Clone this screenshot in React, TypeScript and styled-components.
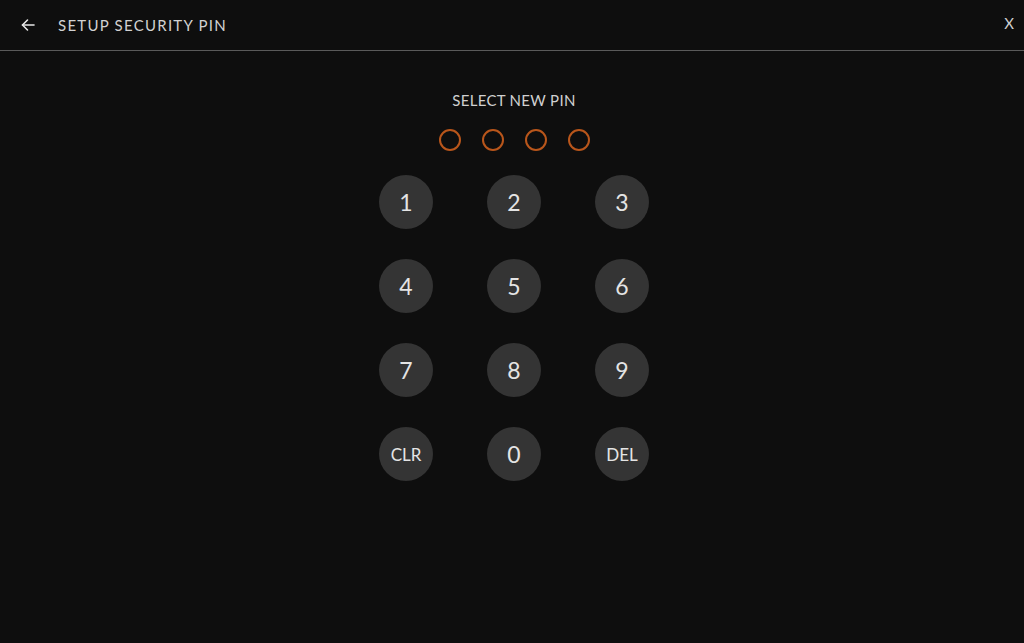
import React from 'react';
import styled, { createGlobalStyle } from 'styled-components';

const GlobalStyle = createGlobalStyle`
  html, body {
    margin: 0;
    padding: 0;
    height: 100%;
    background: #0e0e0e;
  }
  #root {
    height: 100%;
  }
`;

interface KeyProps {
  small?: boolean;
}

const Screen = styled.div`
  height: 100%;
  display: flex;
  flex-direction: column;
  background: #0e0e0e;
  font-family: Lato, "Open Sans", sans-serif;
  color: #e2e2e2;
`;

const Header = styled.header`
  height: 50px;
  display: flex;
  align-items: center;
  padding: 0 10px 0 19px;
  border-bottom: 1px solid #5a5a5a;
`;

const BackButton = styled.button`
  width: 18px;
  height: 18px;
  padding: 0;
  border: 0;
  background: none;
  color: #e6e6e6;
  display: flex;
  align-items: center;
  justify-content: center;
  cursor: pointer;
`;

const Title = styled.h1`
  margin: 0 0 0 21px;
  font-size: 15px;
  font-weight: 400;
  letter-spacing: 1.25px;
  color: #d2d2d2;
  flex: 1;
`;

const CloseButton = styled.button`
  border: 0;
  background: none;
  padding: 0;
  margin-top: -4px;
  font-family: Lato, "Open Sans", sans-serif;
  font-size: 15px;
  color: #cfcfcf;
  cursor: pointer;
`;

const Body = styled.main`
  display: flex;
  flex-direction: column;
  align-items: center;
  padding: 39px 0 0 4px;
`;

const Prompt = styled.div`
  font-size: 15px;
  line-height: 20px;
  letter-spacing: 0.3px;
  color: #d0d0d0;
`;

const Dots = styled.div`
  display: flex;
  gap: 21px;
  margin-top: 19px;
`;

const Dot = styled.span`
  width: 18px;
  height: 18px;
  border-radius: 50%;
  border: 2px solid #b9561b;
`;

const Keypad = styled.div`
  display: grid;
  grid-template-columns: repeat(3, 54px);
  column-gap: 54px;
  row-gap: 30px;
  margin-top: 24px;
`;

const Key = styled.button<KeyProps>`
  width: 54px;
  height: 54px;
  border-radius: 50%;
  border: 0;
  padding: 0;
  background: #343434;
  color: #e4e4e4;
  font-family: Lato, "Open Sans", sans-serif;
  font-size: ${(props: KeyProps) => (props.small ? '17px' : '23px')};
  font-weight: 400;
  display: flex;
  align-items: center;
  justify-content: center;
  cursor: pointer;
`;

const keys = ['1', '2', '3', '4', '5', '6', '7', '8', '9', 'CLR', '0', 'DEL'];

export default function App() {
  return (
    <Screen>
      <GlobalStyle />
      <Header>
        <BackButton aria-label="Back">
          <svg width="14" height="14" viewBox="0 0 14 14" fill="none" stroke="currentColor" strokeWidth="1.6" strokeLinecap="round" strokeLinejoin="round">
            <path d="M13 7H1.5" />
            <path d="M6.5 2L1.5 7l5 5" />
          </svg>
        </BackButton>
        <Title>SETUP SECURITY PIN</Title>
        <CloseButton aria-label="Close">X</CloseButton>
      </Header>
      <Body>
        <Prompt>SELECT NEW PIN</Prompt>
        <Dots>
          {[0, 1, 2, 3].map(i => <Dot key={i} />)}
        </Dots>
        <Keypad>
          {keys.map(k => (
            <Key key={k} small={k.length > 1}>{k}</Key>
          ))}
        </Keypad>
      </Body>
    </Screen>
  );
}
